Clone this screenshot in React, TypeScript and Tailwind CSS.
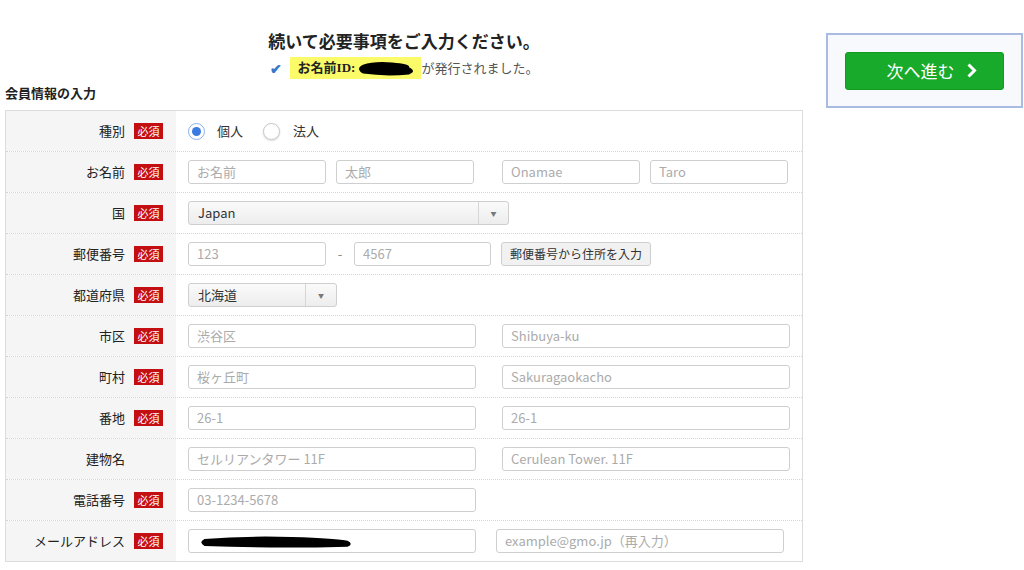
import React from "react";

const font = { fontFamily: '"Noto Sans CJK JP", "Noto Sans", sans-serif' };

const Badge: React.FC = () => (
  <span className="ml-[9px] inline-flex h-[16px] w-[29px] items-center justify-center bg-[#c40f12] text-[11px] leading-none text-white">
    必須
  </span>
);

const Field: React.FC<{ text: string; w: string; ml?: string }> = ({ text, w, ml = "" }) => (
  <div
    className={`${w} ${ml} flex h-[24px] items-center rounded-[3px] border border-[#cfcfcf] bg-white px-[8px] text-[13px] text-[#ababab]`}
  >
    {text}
  </div>
);

const Select: React.FC<{ text: string; w: string; arrow: string }> = ({ text, w, arrow }) => (
  <div
    className={`${w} flex h-[24px] items-center rounded-[3px] border border-[#cfcfcf] bg-gradient-to-b from-[#fafafa] to-[#ededed] text-[13px] text-[#333]`}
  >
    <span className="flex-1 pl-[9px]">{text}</span>
    <span className={`${arrow} flex h-full items-center justify-center border-l border-[#d6d6d6] text-[6px] text-[#777]`}>
      ▼
    </span>
  </div>
);

const Row: React.FC<{ label: string; req?: boolean; last?: boolean; children: React.ReactNode }> = ({
  label,
  req = true,
  last = false,
  children,
}) => (
  <div className={`flex ${last ? "h-[40px]" : "h-[41px] border-b border-dotted border-[#d4d4d4]"}`}>
    <div className="flex w-[170px] shrink-0 items-center justify-end bg-[#f5f5f5] pr-[13px] text-[13px] text-[#222]">
      <span>{label}</span>
      {req ? <Badge /> : <span className="w-[38px]" />}
    </div>
    <div className="flex flex-1 items-center pl-[12px]">{children}</div>
  </div>
);

const Scribble: React.FC<{ w: number; h: number }> = ({ w, h }) => (
  <svg width={w} height={h} viewBox={`0 0 ${w} ${h}`}>
    <path
      d={`M${h / 2} ${h * 0.3} Q${w * 0.3} ${h * 0.05} ${w * 0.6} ${h * 0.15} T${w - h / 2} ${h * 0.45} Q${w} ${h * 0.7} ${w - h / 2} ${h * 0.9} Q${w * 0.5} ${h * 1.05} ${h / 2} ${h * 0.85} Q0 ${h * 0.55} ${h / 2} ${h * 0.3} Z`}
      fill="#000"
    />
  </svg>
);

const App: React.FC = () => {
  return (
    <div className="flex h-[570px] w-[1024px] bg-white" style={font}>
      <div className="ml-[5px] w-[798px]">
        <div className="mt-[29px] text-center text-[17px] font-bold leading-[24px] text-[#222]">
          続いて必要事項をご入力ください。
        </div>
        <div className="mt-[4px] flex items-center justify-center text-[13px]">
          <span className="mr-[8px] text-[14px] font-bold text-[#3a78c9]">✔</span>
          <span
            className="flex h-[22px] items-center bg-[#fbfb6a] pl-[8px] pr-[4px] font-bold text-[#222]"
            style={{ fontFamily: '"Liberation Serif", "Noto Sans CJK JP", serif' }}
          >
            お名前ID:
            <Scribble w={62} h={16} />
          </span>
          <span className="text-[#555]">が発行されました。</span>
        </div>
        <div className="mt-[5px] text-[13px] font-bold leading-[18px] text-[#222]">会員情報の入力</div>
        <div className="mt-[8px] border border-[#dcdcdc]">
          <Row label="種別">
            <span className="flex h-[17px] w-[17px] items-center justify-center rounded-full border border-[#8ab0e8] bg-white">
              <span className="h-[9px] w-[9px] rounded-full bg-[#3a7be0]" />
            </span>
            <span className="ml-[12px] text-[13px] text-[#333]">個人</span>
            <span className="ml-[20px] h-[17px] w-[17px] rounded-full border border-[#c8c8c8] bg-white shadow-[0_1px_2px_rgba(0,0,0,0.15)]" />
            <span className="ml-[13px] text-[13px] text-[#333]">法人</span>
          </Row>
          <Row label="お名前">
            <Field text="お名前" w="w-[138px]" />
            <Field text="太郎" w="w-[138px]" ml="ml-[10px]" />
            <Field text="Onamae" w="w-[138px]" ml="ml-[28px]" />
            <Field text="Taro" w="w-[138px]" ml="ml-[10px]" />
          </Row>
          <Row label="国">
            <Select text="Japan" w="w-[321px]" arrow="w-[30px]" />
          </Row>
          <Row label="郵便番号">
            <Field text="123" w="w-[138px]" />
            <span className="w-[28px] text-center text-[13px] text-[#888]">-</span>
            <Field text="4567" w="w-[137px]" />
            <div className="ml-[10px] flex h-[24px] items-center rounded-[3px] border border-[#cfcfcf] bg-[#f1f1f1] px-[8px] text-[12px] text-[#333]">
              郵便番号から住所を入力
            </div>
          </Row>
          <Row label="都道府県">
            <Select text="北海道" w="w-[149px]" arrow="w-[31px]" />
          </Row>
          <Row label="市区">
            <Field text="渋谷区" w="w-[288px]" />
            <Field text="Shibuya-ku" w="w-[288px]" ml="ml-[26px]" />
          </Row>
          <Row label="町村">
            <Field text="桜ヶ丘町" w="w-[288px]" />
            <Field text="Sakuragaokacho" w="w-[288px]" ml="ml-[26px]" />
          </Row>
          <Row label="番地">
            <Field text="26-1" w="w-[288px]" />
            <Field text="26-1" w="w-[288px]" ml="ml-[26px]" />
          </Row>
          <Row label="建物名" req={false}>
            <Field text="セルリアンタワー 11F" w="w-[288px]" />
            <Field text="Cerulean Tower. 11F" w="w-[288px]" ml="ml-[26px]" />
          </Row>
          <Row label="電話番号">
            <Field text="03-1234-5678" w="w-[288px]" />
          </Row>
          <Row label="メールアドレス" last>
            <div className="flex h-[24px] w-[288px] items-center rounded-[3px] border border-[#cfcfcf] bg-white pl-[9px]">
              <Scribble w={156} h={13} />
            </div>
            <Field text="example@gmo.jp（再入力）" w="w-[288px]" ml="ml-[20px]" />
          </Row>
        </div>
      </div>
      <div className="ml-[23px] mt-[33px] flex h-[75px] w-[197px] items-center justify-center border-2 border-[#aabbe2] bg-[#f7f9fd]">
        <div className="flex h-[38px] w-[159px] items-center justify-center rounded-[3px] border border-[#129a22] bg-[#18aa2a] text-[17px] text-white">
          <span className="ml-[14px]">次へ進む</span>
          <svg className="ml-[11px]" width="11" height="15" viewBox="0 0 11 15">
            <path d="M2.5 1.5 L8.5 7.5 L2.5 13.5" stroke="#fff" strokeWidth="3" fill="none" />
          </svg>
        </div>
      </div>
    </div>
  );
};

export default App;
